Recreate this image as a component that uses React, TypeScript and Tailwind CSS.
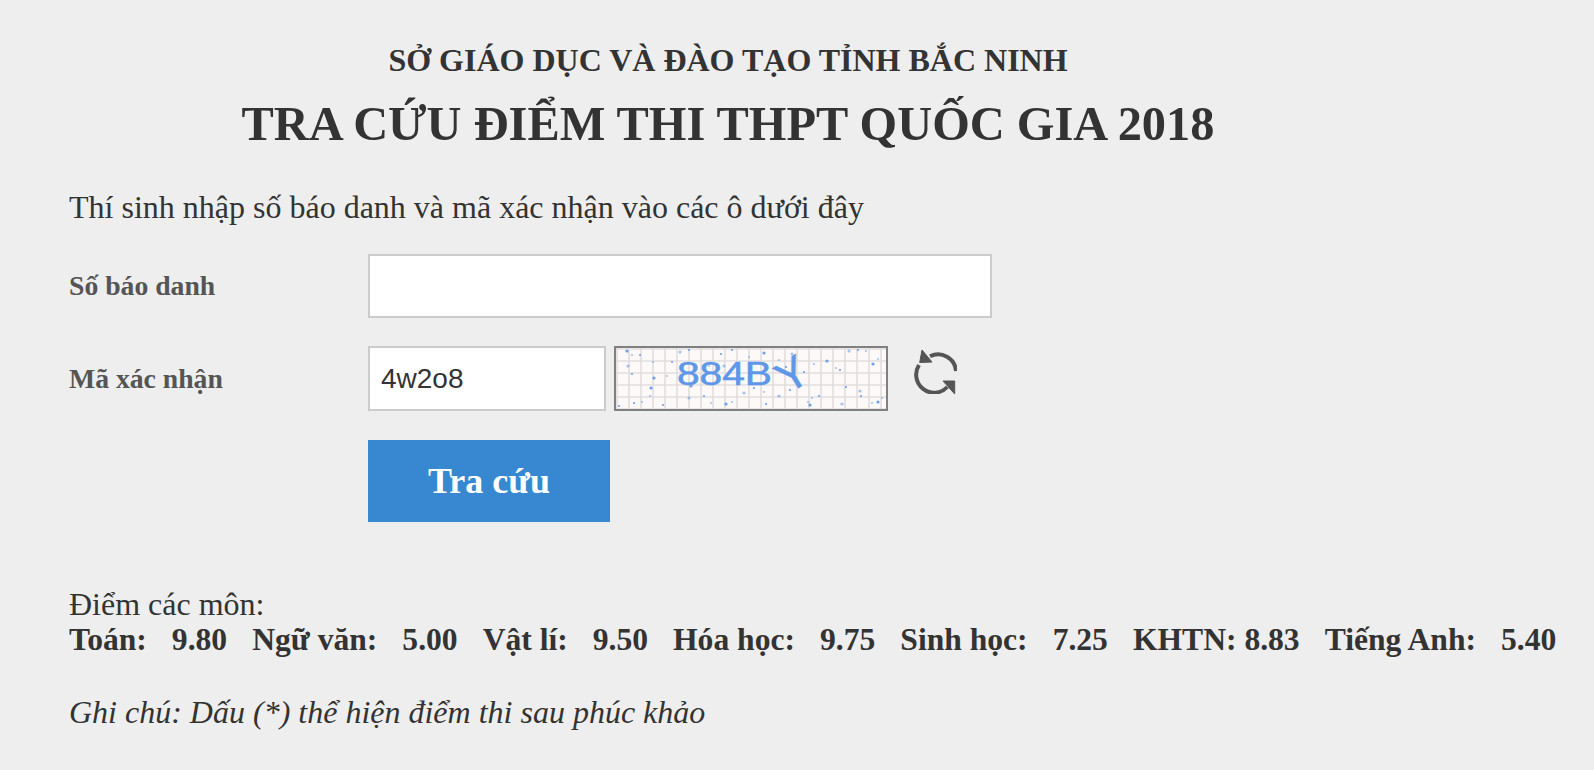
import React from 'react';

const serif = { fontFamily: '"Liberation Serif", "Noto Sans CJK SC", serif' };

// scattered noise on the captcha
const dots: [number, number][] = [
  [13, 5], [18, 9], [26, 9], [14, 20], [18, 28], [39, 16], [40, 32], [53, 30], [58, 16], [66, 6], [75, 4],
  [70, 26], [77, 40], [95, 20], [107, 8], [110, 20], [118, 4], [135, 11], [150, 7], [165, 14], [172, 21],
  [178, 8], [190, 26], [200, 18], [213, 15], [222, 22], [226, 24], [235, 5], [244, 4], [252, 5], [259, 18],
  [264, 13], [232, 41], [246, 45], [20, 57], [28, 56], [37, 42], [36, 50], [49, 59], [75, 52], [90, 50],
  [97, 57], [112, 58], [118, 56], [152, 58], [165, 50], [176, 44], [194, 56], [196, 59], [198, 52], [205, 50],
  [228, 58], [247, 50], [258, 57], [264, 56], [268, 52], [5, 60], [130, 47], [140, 42], [150, 46],
];

const Captcha = () => (
  <svg width="274" height="65" viewBox="2 2 270 61" className="block border-2 border-[#808080] box-border bg-[#fdf9f9]">
    {Array.from({ length: 23 }).map((_, i) => (
      <line key={i} x1={3 + i * 12} y1="0" x2={3 + i * 12} y2="65" stroke="#e2dedd" strokeWidth="1.6" />
    ))}
    {Array.from({ length: 6 }).map((_, i) => (
      <line key={i} x1="0" y1={3 + i * 12} x2="274" y2={3 + i * 12} stroke="#e2dedd" strokeWidth="1.6" />
    ))}
    {dots.map(([x, y], i) => (
      <circle key={i} cx={x} cy={y} r={i % 3 === 0 ? 1.6 : 1.1} fill="#5f97e8" opacity={i % 2 === 0 ? 0.9 : 0.55} />
    ))}
    <text
      x="63"
      y="39"
      fontFamily="Liberation Sans"
      fontSize="33"
      fill="#5f97e8"
      stroke="#5f97e8"
      strokeWidth="0.6"
      textLength="95"
      lengthAdjust="spacingAndGlyphs"
    >
      884B
    </text>
    <text
      fontFamily="Liberation Sans"
      fontSize="44"
      fill="#5f97e8"
      stroke="#5f97e8"
      strokeWidth="0.6"
      textAnchor="middle"
      transform="translate(186 41) rotate(-32)"
    >
      Y
    </text>
  </svg>
);

const RefreshIcon = () => (
  <svg width="44" height="44" viewBox="0 0 44 44" fill="none" className="ml-[25px] self-start mt-[4px]">
    <path d="M17 6.2 A18 18 0 0 1 43 21" stroke="#555" strokeWidth="4" />
    <path d="M9 0 L6.7 12.5 L19 12 Z" fill="#555" stroke="#555" />
    <path d="M6 15 A18 18 0 0 0 34.3 37" stroke="#555" strokeWidth="4" />
    <path d="M41.7 44 L41.7 31 L30 31 Z" fill="#555" stroke="#555" />
  </svg>
);

const scores: { label: string; value: string }[] = [
  { label: 'Toán:', value: '9.80' },
  { label: 'Ngữ văn:', value: '5.00' },
  { label: 'Vật lí:', value: '9.50' },
  { label: 'Hóa học:', value: '9.75' },
  { label: 'Sinh học:', value: '7.25' },
];

export default function App() {
  return (
    <div className="min-h-[770px] bg-[#eeeeee] text-[#333333] overflow-hidden" style={serif}>
      <div className="w-[1456px] pt-[43px] text-center font-bold">
        <h2 className="text-[32px] leading-[34px]">SỞ GIÁO DỤC VÀ ĐÀO TẠO TỈNH BẮC NINH</h2>
        <h1 className="mt-[19px] text-[48.4px] leading-[56px]">TRA CỨU ĐIỂM THI THPT QUỐC GIA 2018</h1>
      </div>

      <div className="pl-[69px]">
        <p className="mt-[37px] text-[32px] leading-[36px]">Thí sinh nhập số báo danh và mã xác nhận vào các ô dưới đây</p>

        <div className="mt-[29px] flex items-center">
          <label className="w-[299px] text-[27.7px] font-bold text-[#555555]">Số báo danh</label>
          <input type="text" className="w-[624px] h-[64px] border-2 border-[#cccccc] bg-white" />
        </div>

        <div className="mt-[28px] flex items-center">
          <label className="w-[299px] text-[27.7px] font-bold text-[#555555]">Mã xác nhận</label>
          <input
            type="text"
            defaultValue="4w2o8"
            className="w-[238px] h-[65px] border-2 border-[#cccccc] bg-white px-[11px] text-[28px] text-[#333333]"
            style={{ fontFamily: '"Liberation Sans", sans-serif' }}
          />
          <div className="ml-[8px]">
            <Captcha />
          </div>
          <RefreshIcon />
        </div>

        <div className="mt-[29px] pl-[299px]">
          <button className="w-[242px] h-[82px] bg-[#3788d1] text-white text-[36px] font-bold">Tra cứu</button>
        </div>

        <p className="mt-[65px] text-[32px] leading-[35px]">Điểm các môn:</p>
        <div className="flex gap-[25px] text-[31.6px] leading-[35px] font-bold whitespace-nowrap">
          {scores.map((s) => (
            <span key={s.label} className="flex gap-[25px]">
              <span>{s.label}</span>
              <span>{s.value}</span>
            </span>
          ))}
          <span>KHTN: 8.83</span>
          <span className="flex gap-[25px]">
            <span>Tiếng Anh:</span>
            <span>5.40</span>
          </span>
        </div>
        <p className="mt-[38px] text-[32px] leading-[35px] italic">Ghi chú: Dấu (*) thể hiện điểm thi sau phúc khảo</p>
      </div>
    </div>
  );
}
